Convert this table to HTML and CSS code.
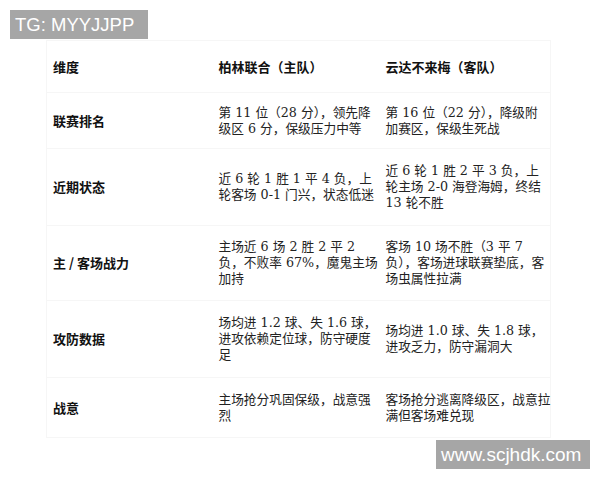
FILE: index.html
```html
<!DOCTYPE html>
<html lang="zh-CN">
<head>
<meta charset="utf-8">
<title>对比</title>
<link rel="stylesheet" href="styles.css">
</head>
<body>
<div class="page">
  <table class="cmp">
    <colgroup>
      <col class="c1"><col class="c2"><col class="c3">
    </colgroup>
    <thead>
      <tr class="r-head">
        <th class="lab">维度</th>
        <th class="home">柏林联合（主队）</th>
        <th class="away">云达不来梅（客队）</th>
      </tr>
    </thead>
    <tbody>
      <tr class="r1">
        <td class="lab">联赛排名</td>
        <td class="home">第 11 位（28 分），领先降<br>级区 6 分，保级压力中等</td>
        <td class="away">第 16 位（22 分），降级附<br>加赛区，保级生死战</td>
      </tr>
      <tr class="r2">
        <td class="lab">近期状态</td>
        <td class="home">近 6 轮 1 胜 1 平 4 负，上<br>轮客场 0-1 门兴，状态低迷</td>
        <td class="away">近 6 轮 1 胜 2 平 3 负，上<br>轮主场 2-0 海登海姆，终结<br>13 轮不胜</td>
      </tr>
      <tr class="r3">
        <td class="lab">主 / 客场战力</td>
        <td class="home">主场近 6 场 2 胜 2 平 2<br>负，不败率 67%，魔鬼主场<br>加持</td>
        <td class="away">客场 10 场不胜（3 平 7<br>负），客场进球联赛垫底，客<br>场虫属性拉满</td>
      </tr>
      <tr class="r4">
        <td class="lab">攻防数据</td>
        <td class="home">场均进 1.2 球、失 1.6 球，<br>进攻依赖定位球，防守硬度<br>足</td>
        <td class="away">场均进 1.0 球、失 1.8 球，<br>进攻乏力，防守漏洞大</td>
      </tr>
      <tr class="r5">
        <td class="lab">战意</td>
        <td class="home">主场抢分巩固保级，战意强<br>烈</td>
        <td class="away">客场抢分逃离降级区，战意拉<br>满但客场难兑现</td>
      </tr>
    </tbody>
  </table>
  <div class="wm wm-top">TG: MYYJJPP</div>
  <div class="wm wm-bottom">www.scjhdk.com</div>
</div>
</body>
</html>
```

FILE: styles.css
```css
html, body {
  margin: 0;
  padding: 0;
  background: #ffffff;
}

.page {
  position: relative;
  width: 600px;
  height: 480px;
  overflow: hidden;
  padding-top: 40px;
  box-sizing: border-box;
}

.cmp {
  margin-left: 46px;
  width: 504px;
  table-layout: fixed;
  border-collapse: collapse;
  font-family: "DejaVu Serif", "Noto Sans CJK SC", serif;
  font-size: 12.7px;
  line-height: 16px;
  color: #222222;
}

.c1 { width: 164px; }
.c2 { width: 168px; }
.c3 { width: 172px; }

.cmp th,
.cmp td {
  padding: 0;
  vertical-align: middle;
  text-align: left;
  white-space: nowrap;
  border-top: 1px solid #f6f6f6;
  border-bottom: 1px solid #f6f6f6;
}

.cmp th {
  font-family: "Noto Sans CJK SC", sans-serif;
  font-weight: bold;
  font-size: 13px;
  color: #111111;
}

.cmp td.lab {
  font-family: "Noto Sans CJK SC", sans-serif;
  font-weight: bold;
  font-size: 13px;
  color: #111111;
}

.cmp .lab {
  padding-left: 6px;
  border-left: 1px solid #f6f6f6;
}

.cmp .home {
  padding-left: 8px;
}

.cmp .away {
  padding-left: 7px;
  border-right: 1px solid #f6f6f6;
}

.r-head { height: 52px; }
.r1 { height: 56px; }
.r2 { height: 77px; }
.r3 { height: 75px; }
.r4 { height: 77px; }
.r5 { height: 60px; }

.wm {
  position: absolute;
  background: #a6a6a6;
  color: #ffffff;
  font-family: "Liberation Sans", Arial, sans-serif;
  line-height: 29px;
  height: 29px;
  box-sizing: border-box;
  white-space: nowrap;
}

.wm-top {
  left: 10px;
  top: 10px;
  width: 138px;
  padding-left: 5px;
  font-size: 18.5px;
}

.wm-bottom {
  left: 436px;
  top: 440px;
  width: 154px;
  padding-left: 5px;
  font-size: 19px;
}
```
